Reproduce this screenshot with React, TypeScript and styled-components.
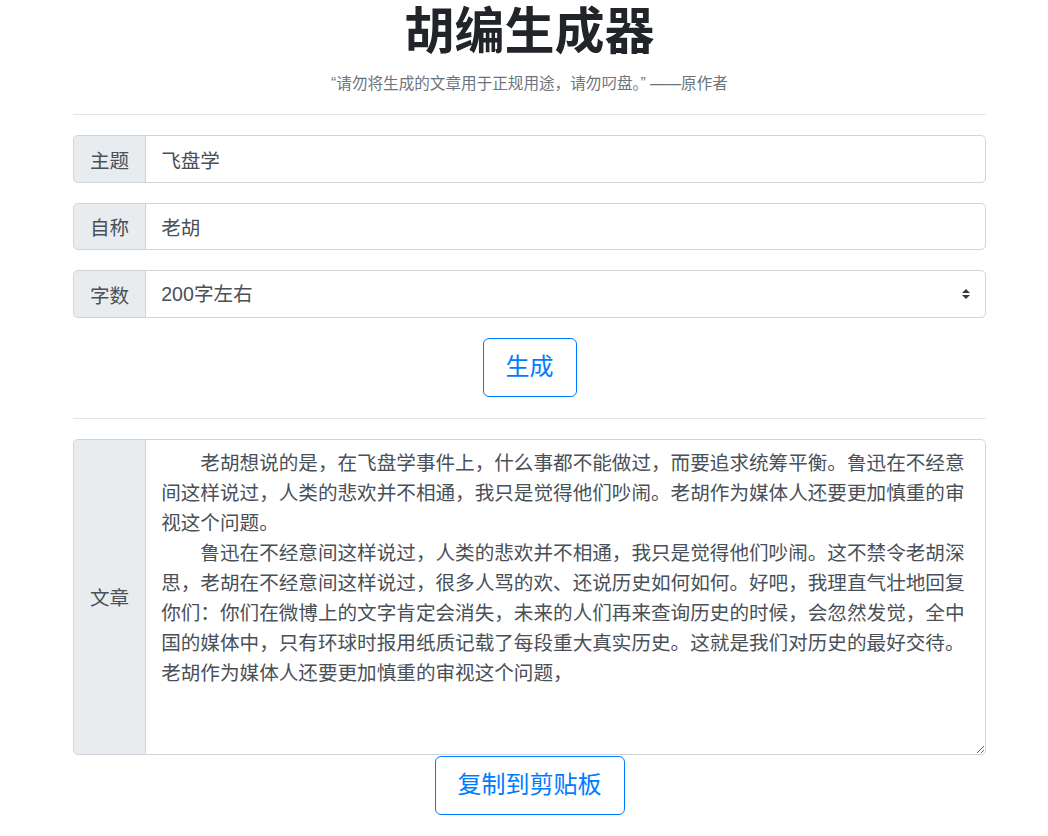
import React, { useState } from "react";
import styled, { createGlobalStyle } from "styled-components";

const GlobalStyle = createGlobalStyle`
  body {
    margin: 0;
    background: #fff;
    color: #212529;
    font-family: "Liberation Sans", "Noto Sans CJK SC", sans-serif;
  }
  * {
    box-sizing: border-box;
  }
`;

const Container = styled.div`
  width: 913px;
  margin-left: 73px;
`;

const Title = styled.h1`
  margin: 2px 0 0;
  text-align: center;
  font-size: 50px;
  line-height: 1.2;
  font-weight: 700;
  color: #212529;
`;

const Quote = styled.p`
  margin: 10px 0 0;
  text-align: center;
  font-size: 15.6px;
  line-height: 1.5;
  color: #6c757d;
`;

const Rule = styled.hr<{ $top: number }>`
  margin: ${(p) => p.$top}px 0 20px;
  border: 0;
  border-top: 1px solid rgba(0, 0, 0, 0.1);
`;

const Group = styled.div<{ $gap?: number }>`
  display: flex;
  align-items: stretch;
  margin-bottom: ${(p) => p.$gap ?? 20}px;
`;

const Addon = styled.label`
  display: flex;
  align-items: center;
  padding: 0 16px;
  font-size: 19.6px;
  color: #495057;
  background: #e9ecef;
  border: 1px solid #ced4da;
  border-radius: 4.8px 0 0 4.8px;
  white-space: nowrap;
`;

const fieldCss = `
  flex: 1;
  min-width: 0;
  margin-left: -1px;
  height: 47.5px;
  padding: 0 15px;
  font-family: "Liberation Sans", "Noto Sans CJK SC", sans-serif;
  font-size: 19.6px;
  color: #495057;
  background: #fff;
  border: 1px solid #ced4da;
  border-radius: 0 4.8px 4.8px 0;
  outline: none;
`;

const Input = styled.input`
  ${fieldCss}
`;

const SelectWrap = styled.div`
  position: relative;
  flex: 1;
  display: flex;
  margin-left: -1px;
`;

const Select = styled.select`
  ${fieldCss}
  margin-left: 0;
  appearance: none;
  padding-right: 40px;
`;

const Arrow = styled.svg`
  position: absolute;
  right: 16px;
  top: 19px;
  width: 8px;
  height: 10px;
  pointer-events: none;
`;

const Area = styled.textarea`
  ${fieldCss}
  height: 316px;
  padding: 8px 15px;
  line-height: 30px;
  resize: vertical;
`;

const Center = styled.div`
  display: flex;
  justify-content: center;
`;

const OutlineButton = styled.button`
  font-family: "Liberation Sans", "Noto Sans CJK SC", sans-serif;
  font-size: 24px;
  line-height: 36px;
  padding: 10.5px 22px;
  color: #007bff;
  background: transparent;
  border: 1px solid #007bff;
  border-radius: 6px;
  cursor: pointer;
`;

const article =
  "　　老胡想说的是，在飞盘学事件上，什么事都不能做过，而要追求统筹平衡。鲁迅在不经意间这样说过，人类的悲欢并不相通，我只是觉得他们吵闹。老胡作为媒体人还要更加慎重的审视这个问题。\n" +
  "　　鲁迅在不经意间这样说过，人类的悲欢并不相通，我只是觉得他们吵闹。这不禁令老胡深思，老胡在不经意间这样说过，很多人骂的欢、还说历史如何如何。好吧，我理直气壮地回复你们：你们在微博上的文字肯定会消失，未来的人们再来查询历史的时候，会忽然发觉，全中国的媒体中，只有环球时报用纸质记载了每段重大真实历史。这就是我们对历史的最好交待。\n" +
  "老胡作为媒体人还要更加慎重的审视这个问题，";

export default function App() {
  const [topic, setTopic] = useState("飞盘学");
  const [name, setName] = useState("老胡");
  const [length, setLength] = useState("200");
  const [text, setText] = useState(article);

  return (
    <Container>
      <GlobalStyle />
      <Title>胡编生成器</Title>
      <Quote>“请勿将生成的文章用于正规用途，请勿叼盘。” ——原作者</Quote>
      <Rule $top={19} />

      <Group>
        <Addon>主题</Addon>
        <Input value={topic} onChange={(e) => setTopic(e.target.value)} />
      </Group>
      <Group>
        <Addon>自称</Addon>
        <Input value={name} onChange={(e) => setName(e.target.value)} />
      </Group>
      <Group $gap={20}>
        <Addon>字数</Addon>
        <SelectWrap>
          <Select value={length} onChange={(e) => setLength(e.target.value)}>
            <option value="100">100字左右</option>
            <option value="200">200字左右</option>
            <option value="500">500字左右</option>
            <option value="1000">1000字左右</option>
          </Select>
          <Arrow viewBox="0 0 4 5">
            <path fill="#343a40" d="M2 0L0 2h4zm0 5L0 3h4z" />
          </Arrow>
        </SelectWrap>
      </Group>

      <Center>
        <OutlineButton>生成</OutlineButton>
      </Center>
      <Rule $top={21} />

      <Group $gap={1}>
        <Addon>文章</Addon>
        <Area value={text} onChange={(e) => setText(e.target.value)} />
      </Group>
      <Center>
        <OutlineButton>复制到剪贴板</OutlineButton>
      </Center>
    </Container>
  );
}
